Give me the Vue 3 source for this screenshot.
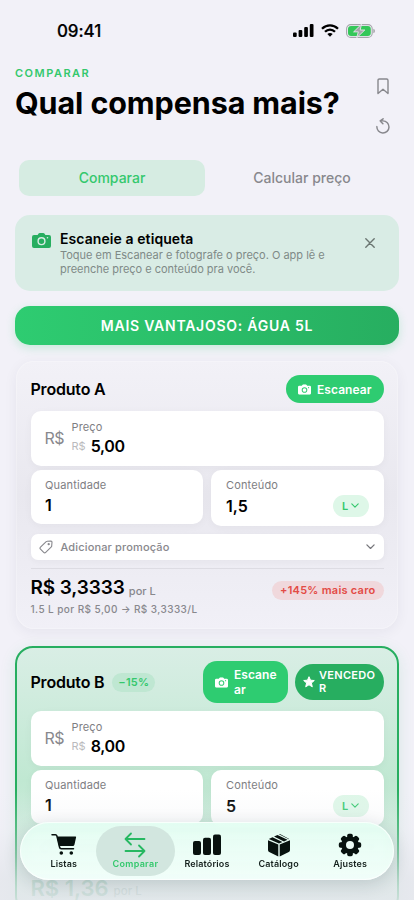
<script setup>
const products = [
  {
    name: 'Produto A', price: '5,00', qty: '1', content: '1,5', unit: 'L',
    result: 'R$ 3,3333', detail: '1.5 L por R$ 5,00 → R$ 3,3333/L',
    more: '+145% mais caro', winner: false,
  },
  {
    name: 'Produto B', price: '8,00', qty: '1', content: '5', unit: 'L', discount: '−15%',
    result: 'R$ 1,36', winner: true,
  },
]
const bars = [{ h: 4.5, x: 0 }, { h: 7, x: 5.6 }, { h: 10, x: 11.2 }, { h: 13, x: 16.8 }]
</script>

<template>
  <div class="screen">
    <svg width="0" height="0" class="defs" aria-hidden="true">
      <symbol id="camera" viewBox="0 0 19 15">
        <path fill-rule="evenodd" d="M2 2h3.600l1-1.400Q7 0 7.700 0h3.600Q12 0 12.400 .6l1 1.400H17q2 0 2 2v9q0 2-2 2H2q-2 0-2-2V4q0-2 2-2zM9.500 4.100a4.100 4.100 0 1 0 0 8.200a4.100 4.100 0 0 0 0-8.200zm0 1.400a2.700 2.700 0 1 1 0 5.400a2.700 2.700 0 0 1 0-5.400zM15.500 4a.8 .8 0 1 0 0 1.600a.8 .8 0 0 0 0-1.600z" />
      </symbol>
      <symbol id="chevron" viewBox="0 0 10 6">
        <path d="M1 1l4 4l4-4" fill="none" stroke="currentColor" stroke-width="1.400" stroke-linecap="round" stroke-linejoin="round" />
      </symbol>
    </svg>

    <div class="status">
      <span class="time">09:41</span>
      <div class="indicators">
        <svg width="21" height="13" viewBox="0 0 21 13">
          <rect v-for="b in bars" :key="b.x" :x="b.x" :y="13 - b.h" width="3.700" :height="b.h" rx="1.100" />
        </svg>
        <svg width="18" height="13" viewBox="0 0 18 13" fill="none" stroke="#000" stroke-width="2.300">
          <path d="M1 4.700Q4.500 1.300 9 1.300T17 4.700" />
          <path d="M4 7.800Q6.200 5.600 9 5.600T14 7.800" />
          <path d="M9 12.800L6.300 10.100Q9 8 11.700 10.100z" fill="#000" stroke="none" />
        </svg>
        <svg class="battery" width="30" height="14" viewBox="0 0 30 14">
          <rect x=".6" y=".6" width="25.600" height="12.800" rx="4.200" fill="none" stroke="#a5a5aa" stroke-width="1.100" />
          <rect x="2" y="2" width="22.800" height="10" rx="3" fill="#34c759" />
          <path d="M27.300 4.700q1.700 .5 1.700 2.300t-1.700 2.300z" fill="#a5a5aa" />
          <path d="M15.500 .2L7.600 7.900h4.700L10.700 13.800L18.800 6h-4.600z" fill="#a5a5aa" stroke="#f2f1f8" stroke-width=".8" stroke-linejoin="round" />
        </svg>
      </div>
    </div>

    <header class="header">
      <div>
        <div class="eyebrow">COMPARAR</div>
        <h1>Qual compensa mais?</h1>
      </div>
      <div class="actions">
        <svg width="12" height="17" viewBox="0 0 12 17" fill="none" stroke="#88888d" stroke-width="1.400" stroke-linejoin="round"><path d="M1 15.500V2.400Q1 1 2.400 1h7.200Q11 1 11 2.400v13.100L6 11.200z" /></svg>
        <svg width="14" height="16" viewBox="0 0 14 16" fill="none" stroke="#88888d" stroke-width="1.450" stroke-linecap="round" stroke-linejoin="round"><path d="M.9 8.600A6.050 6.050 0 1 0 7 2.900H4.200M7.100 .8L4.200 2.900L6.900 5.700" /></svg>
      </div>
    </header>

    <div class="tabs">
      <div class="tab active">Comparar</div>
      <div class="tab">Calcular preço</div>
    </div>

    <section class="tip">
      <svg class="tip-icon" width="19" height="15"><use href="#camera" /></svg>
      <div class="tip-body">
        <strong>Escaneie a etiqueta</strong>
        <p>Toque em Escanear e fotografe o preço. O app lê e<br>preenche preço e conteúdo pra você.</p>
      </div>
      <svg class="close" width="10" height="10" viewBox="0 0 10 10"><path d="M.8 .8l8.400 8.400M9.200 .8L.8 9.200" stroke="#6b7672" stroke-width="1.400" stroke-linecap="round" /></svg>
    </section>

    <div class="cta">MAIS VANTAJOSO: ÁGUA 5L</div>

    <article v-for="p in products" :key="p.name" class="card" :class="{ winner: p.winner }">
      <div class="card-head">
        <h2>{{ p.name }}</h2>
        <span v-if="p.discount" class="discount">{{ p.discount }}</span>
        <div class="scan">
          <svg width="13" height="11" viewBox="0 0 19 15"><use href="#camera" /></svg>
          <span v-if="p.winner">Escane<br>ar</span>
          <span v-else>Escanear</span>
        </div>
        <div v-if="p.winner" class="badge">
          <svg width="12" height="12" viewBox="0 0 12 12"><path d="M6 .7l1.500 3.500 3.800 .3-2.900 2.500 .9 3.800L6 8.800l-3.300 2 .9-3.800L.7 4.500l3.800-.3z" fill="#fff" stroke="#fff" stroke-linejoin="round" /></svg>
          <span>VENCEDO<br>R</span>
        </div>
      </div>

      <div class="field price">
        <span class="currency">R$</span>
        <div>
          <label>Preço</label>
          <div class="amount"><small>R$</small><b>{{ p.price }}</b></div>
        </div>
      </div>
      <div class="pair">
        <div class="field qty"><label>Quantidade</label><b>{{ p.qty }}</b></div>
        <div class="field content">
          <label>Conteúdo</label>
          <div class="content-row">
            <b>{{ p.content }}</b>
            <span class="unit">{{ p.unit }}<svg width="8" height="5"><use href="#chevron" /></svg></span>
          </div>
        </div>
      </div>
      <div class="promo">
        <svg width="14" height="14" viewBox="0 0 14 14" fill="none" stroke="#88888d" stroke-width="1.100"><path d="M8.100 1.200L12 1q1 0 1 1L12.700 5.900Q12.700 6.400 12.300 6.800L6.700 12.400Q5.700 13.400 4.700 12.400L1.500 9.200Q.5 8.200 1.500 7.200L7.200 1.600Q7.600 1.200 8.100 1.200z" /><circle cx="9.700" cy="4.200" r=".6" /></svg>
        <span>Adicionar promoção</span>
        <svg class="promo-chevron" width="9" height="5.400"><use href="#chevron" /></svg>
      </div>
      <div class="result">
        <strong>{{ p.result }}</strong><span class="per">por L</span>
        <span v-if="p.more" class="more">{{ p.more }}</span>
      </div>
      <div v-if="p.detail" class="detail">{{ p.detail }}</div>
    </article>

    <div class="fade"></div>

    <nav class="nav">
      <div class="item">
        <svg width="26" height="24" viewBox="0 0 26 24">
          <path d="M1 1.700H4.500Q5.500 1.700 5.800 2.700L8.500 14Q8.800 15.700 10.200 15.700H22.500" fill="none" stroke="#08120f" stroke-width="1.500" stroke-linecap="round" />
          <path d="M5.700 3.500H24.500q.8 0 .6 .8L23.500 11.500q-.3 1.500-1.800 1.500H8z" fill="#08120f" />
          <circle cx="10.300" cy="20" r="1.800" fill="#08120f" /><circle cx="20.300" cy="20" r="1.800" fill="#08120f" />
        </svg>
        <span>Listas</span>
      </div>
      <div class="item active">
        <svg width="22" height="26" viewBox="0 0 22 26" fill="none" stroke="#27b862" stroke-width="1.800" stroke-linecap="round" stroke-linejoin="round"><path d="M20.500 7H1.500M7 1.500L1.500 7L7 12.500M1.500 19H20.500M15 13.500L20.500 19L15 24.500" /></svg>
        <span>Comparar</span>
      </div>
      <div class="item">
        <svg width="28" height="24" viewBox="0 0 28 24" fill="#08120f"><rect x="0" y="8" width="8" height="14" rx="2" /><rect x="10" y="4.800" width="8" height="17.200" rx="2" /><rect x="20" y="1.500" width="8" height="20.500" rx="2" /></svg>
        <span>Relatórios</span>
      </div>
      <div class="item">
        <svg width="22" height="24" viewBox="0 0 22 24" fill="#08120f"><path d="M0 7.300L10.300 11.600V23.500L1.200 19Q0 18.400 0 17zM22 7.300L11.700 11.600V23.500L20.800 19Q22 18.400 22 17zM.8 5.900L4.500 4.200L14.400 9.100L11 10.500zM6 3.500L9.500 1.900L19.500 6.800L16 8.400zM11 1.200Q11.700 .9 12.400 1.300L21.200 5.900L20.800 6.200z" /></svg>
        <span>Catálogo</span>
      </div>
      <div class="item">
        <svg width="24" height="24" viewBox="0 0 24 24">
          <g fill="#08120f"><rect v-for="n in 4" :key="n" x="9.200" y=".8" width="5.600" height="22.400" rx="1.700" :transform="`rotate(${n * 45} 12 12)`" /><circle cx="12" cy="12" r="8.800" /></g>
          <circle cx="12" cy="12" r="4" fill="#edfcf6" />
        </svg>
        <span>Ajustes</span>
      </div>
    </nav>
  </div>
</template>

<style>
body { margin: 0; background: #f2f1f8; }
</style>

<style scoped>
* { box-sizing: border-box; }
.screen { position: relative; width: 414px; height: 900px; overflow: hidden; background: #f2f1f8; color: #000; font-family: Inter, "Liberation Sans", sans-serif; }
.defs { position: absolute; }
svg { flex: none; display: block; }
.status { height: 62px; padding: 0 38px 0 57px; display: flex; justify-content: space-between; align-items: center; }
.time { font-size: 17px; font-weight: 500; letter-spacing: -.1px; -webkit-text-stroke: .2px #000; }
.indicators { display: flex; align-items: center; gap: 7px; margin-top: -1px; }
.header { height: 98px; padding: 4px 24px 0 15px; display: flex; justify-content: space-between; }
.eyebrow { margin-top: 1px; font-size: 11px; line-height: 13px; font-weight: 600; letter-spacing: 1.500px; color: #34c86d; }
h1 { margin: 5px 0 0; font-size: 30.500px; line-height: 36px; font-weight: 700; letter-spacing: -.1px; white-space: nowrap; }
.actions { display: flex; flex-direction: column; align-items: center; gap: 23px; padding-top: 12px; }
.tabs { margin: 0 19px; height: 36px; display: grid; grid-template-columns: 186px 1fr; gap: 4px; }
.tab { display: flex; align-items: center; justify-content: center; padding-bottom: 2px; border-radius: 10px; font-size: 14px; font-weight: 500; color: #88888d; }
.tab.active { background: #d6ece2; color: #34c86d; }
.tip { margin: 19px 15px 0; height: 76px; padding: 15px 23px 0 17px; display: flex; border-radius: 15px; background: #d9ece5; }
.tip-icon { margin-top: 3px; fill: #27ae60; }
.tip-body { flex: 1; margin-left: 9px; }
.tip-body strong { display: block; font-size: 14px; line-height: 17px; font-weight: 600; letter-spacing: .08px; }
.tip-body p { margin: 2px 0 0; font-size: 11px; line-height: 13.500px; color: #7f8a87; white-space: nowrap; letter-spacing: -.01px; }
.close { margin: 8px 1px 0 0; }
.cta { margin: 15px 15px 0; height: 39px; display: flex; align-items: center; justify-content: center; border-radius: 15px; background: linear-gradient(90deg, #2ecc71, #27ae60); color: #fff; font-size: 14px; font-weight: 600; letter-spacing: .75px; box-shadow: 0 3px 10px rgba(46, 204, 113, .22); }
.card { margin: 16px 16px 0; height: 268px; padding: 14px 14.500px 0; border-radius: 18px; background: linear-gradient(#f2f1f7, #e9e8ef 50%, #f1f0f7); box-shadow: 0 3px 14px rgba(40, 40, 60, .06), inset 0 0 0 1px rgba(255, 255, 255, .25); }
.card-head { height: 28px; margin-bottom: 8px; display: flex; align-items: center; }
h2 { margin: 0; font-size: 16px; font-weight: 600; letter-spacing: -.2px; white-space: nowrap; }
.scan { margin-left: auto; height: 28px; padding: 0 12px; display: flex; align-items: center; gap: 6px; border-radius: 14px; background: #2ecc71; color: #fff; fill: #fff; font-size: 12px; line-height: 15px; font-weight: 600; letter-spacing: .05px; }
.field { border-radius: 10px; background: #fff; box-shadow: 0 2px 8px rgba(40, 40, 60, .04); }
.field b { font-size: 16px; line-height: 20px; font-weight: 600; }
.field label { display: block; font-size: 11px; line-height: 14px; color: #7e7e83; letter-spacing: .15px; }
.price { height: 54.500px; padding: 9px 14px; display: flex; }
.currency { width: 27px; font-size: 16px; line-height: 37px; color: #88888d; letter-spacing: -.5px; }
.amount { display: flex; align-items: center; gap: 5px; margin-top: 2px; }
.amount small { font-size: 11px; color: #bababd; }
.amount b { letter-spacing: -.3px; }
.pair { margin-top: 4px; display: grid; grid-template-columns: 172.500px 1fr; gap: 8px; align-items: start; }
.qty { height: 54.500px; padding: 8.500px 14.500px; }
.qty b { display: block; margin-top: 2.500px; }
.content { height: 56.500px; padding: 8.500px 15px; }
.content-row { display: flex; align-items: center; justify-content: space-between; height: 22px; margin-top: 2.500px; }
.unit { width: 36px; height: 22px; display: flex; align-items: center; justify-content: center; gap: 3px; border-radius: 11px; background: #def7e8; color: #34c86d; font-size: 11px; font-weight: 600; }
.promo { margin-top: 7.500px; height: 26.500px; padding: 0 9px 0 8px; display: flex; align-items: center; border-radius: 7px; background: #fff; box-shadow: 0 2px 6px rgba(40, 40, 60, .04); }
.promo span { margin-left: 8px; font-size: 11px; font-weight: 500; color: #88888d; letter-spacing: .15px; }
.promo-chevron { margin-left: auto; color: #77777c; }
.result { margin-top: 7.500px; padding-top: 9px; height: 31px; border-top: 1px solid #dddce3; display: flex; align-items: center; white-space: nowrap; }
.result strong { font-size: 19px; line-height: 20px; font-weight: 600; letter-spacing: -.1px; }
.per { margin: 5px 0 0 4px; font-size: 11px; font-weight: 500; color: #88888d; letter-spacing: .05px; }
.more { margin-left: auto; margin-top: 4px; padding: 0 8px; border-radius: 10px; background: #f0d8dc; color: #e34b45; font-size: 11px; line-height: 19px; font-weight: 600; letter-spacing: .25px; }
.detail { margin-top: 3.500px; font-size: 10px; line-height: 14px; font-weight: 500; color: #88888d; letter-spacing: .42px; white-space: nowrap; }
.card.winner { margin: 17px 15px 0; padding: 13px 13.500px 0; border: 2px solid #27ae60; background: linear-gradient(#d9eee5, #c0e8d2 50%, #d9eee5); box-shadow: 0 4px 16px rgba(39, 174, 96, .13); }
.winner .card-head { height: 42px; }
.winner .scan { width: 85px; height: 42px; padding-right: 0; }
.winner .result strong { font-size: 22px; letter-spacing: 0; color: #6dbb92; }
.winner .per { color: #8fb7a4; margin-left: 5px; font-size: 11.500px; }
.discount { margin-left: 8px; padding: 0 6px; border-radius: 10px; background: #bfe7d2; color: #34c86d; font-size: 11px; line-height: 19px; font-weight: 600; letter-spacing: .2px; }
.badge { width: 88.500px; height: 36px; margin-left: 7px; padding-left: 8px; display: flex; align-items: center; gap: 4px; border-radius: 18px; background: #27ae60; color: #fff; font-size: 11px; line-height: 13.500px; font-weight: 600; letter-spacing: .3px; }
.fade { position: absolute; left: 0; right: 0; bottom: 0; height: 110px; background: linear-gradient(rgba(238, 239, 244, 0), rgba(232, 235, 240, .25) 35%, rgba(226, 229, 234, .72) 80%, rgba(228, 231, 236, .85)); }
.nav { position: absolute; left: 20px; top: 822px; width: 374px; height: 58px; padding: 4px 8px; display: grid; grid-template-columns: repeat(5, 1fr); border-radius: 29px; background: linear-gradient(rgba(226, 253, 241, .95), rgba(242, 254, 250, .97)); backdrop-filter: blur(2px); box-shadow: 0 4px 18px rgba(20, 40, 50, .16), inset 0 0 0 1px rgba(255, 255, 255, .7); }
.item { display: flex; flex-direction: column; align-items: center; justify-content: flex-end; border-radius: 25px; padding-bottom: 6px; font-size: 9px; font-weight: 600; line-height: 12px; letter-spacing: .15px; color: #14201c; }
.item svg { height: 24px; margin-bottom: 1px; }
.item.active { margin: 0 -4px; background: #d2e6df; color: #34c86d; letter-spacing: .3px; }
.item.active svg { height: 26px; margin-bottom: 0; }
</style>
